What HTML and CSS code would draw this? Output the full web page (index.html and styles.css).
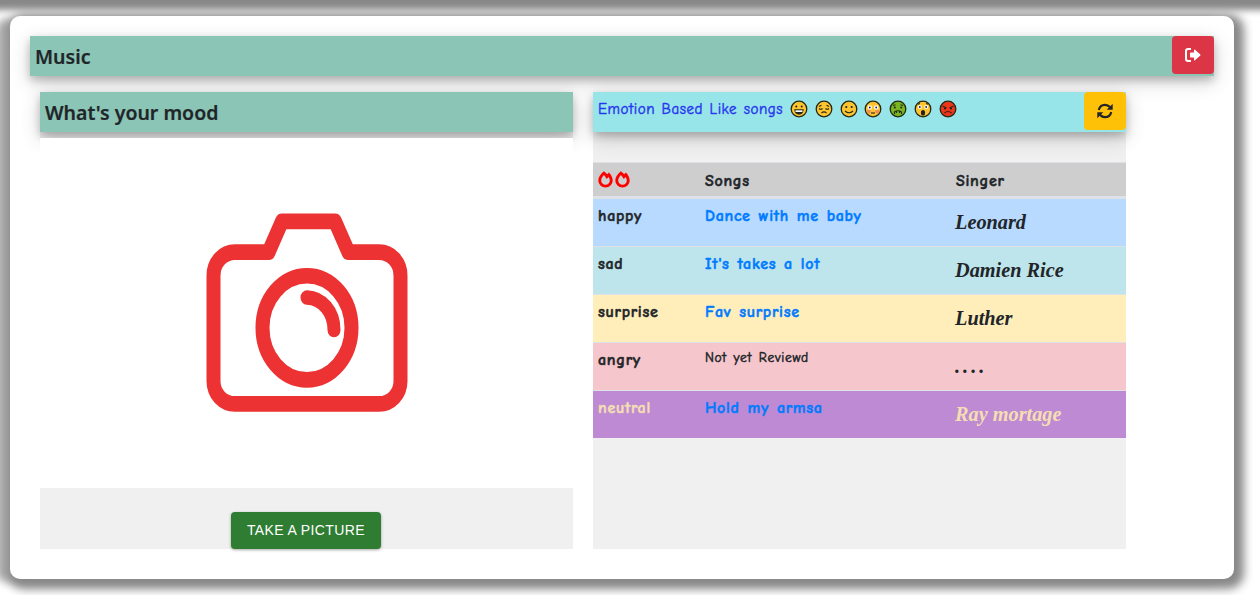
FILE: index.html
```html
<!DOCTYPE html>
<html lang="en">
<head>
<meta charset="utf-8">
<title>Music</title>
<link rel="stylesheet" href="styles.css">
</head>
<body>
<div class="page-top"></div>
<main class="card">
  <header class="bar">
    <h1 class="title">Music</h1>
    <button class="icon-btn danger" aria-label="Log out">
      <svg width="16" height="16" viewBox="0 0 16 16"><path d="M6 2H3.200Q1 2 1 4.200V11.800Q1 14 3.200 14H6" fill="none" stroke="#fff" stroke-width="2"/><path d="M5 6.200Q5 5.500 5.700 5.500H9V3.200Q9 2.200 10 2.800L15.300 7.400Q15.900 8 15.300 8.600L10 13.200Q9 13.800 9 12.800V10.500H5.700Q5 10.500 5 9.800Z" fill="#fff"/></svg>
    </button>
  </header>
  <div class="columns">
    <section class="panel">
      <div class="bar"><h2 class="title">What's your mood</h2></div>
      <div class="photo">
        <svg width="204" height="202" viewBox="0 0 204 202" fill="none" stroke="#ec3232">
          <g transform="scale(1 1.120)" stroke-width="14" stroke-linejoin="round">
            <path d="M29 35H62.500L76 7.500H129L142.500 35H173C185 35 194.500 44 194.500 56V150C194.500 161.500 185 170.500 173 170.500H29C17 170.500 7.500 161.500 7.500 150V56C7.500 44 17 35 29 35Z"/>
            <ellipse cx="101" cy="102.500" rx="44.500" ry="46.500"/>
            <path d="M101 75.500C116 76 128 88 128 104.500" stroke-width="13" stroke-linecap="round"/>
          </g>
        </svg>
      </div>
      <div class="actions"><button class="take">TAKE A PICTURE</button></div>
    </section>
    <section class="panel">
      <div class="bar aqua">
        <div class="caption"><span class="caption-text">Emotion Based Like songs</span>
          <span class="faces">
            <svg class="face" viewBox="0 0 18 18"><circle cx="9" cy="9" r="7.800"/><path d="M5 10H13Q12.500 14 9 14T5 10Z" fill="#222"/><path class="white" d="M5.500 10.300H12.500V12H5.500Z"/><circle class="dot" cx="6.300" cy="6.500" r="1"/><circle class="dot" cx="11.700" cy="6.500" r="1"/></svg>
            <svg class="face" viewBox="0 0 18 18"><circle cx="9" cy="9" r="7.800"/><path class="line" d="M4 8.500Q5.800 10 7.500 8.500M10.500 8.500Q12.200 10 14 8.500M6.500 13Q9 10.800 11.500 13M4 6.500L6.500 5.200M14 6.500L11.500 5.200"/></svg>
            <svg class="face" viewBox="0 0 18 18"><circle cx="9" cy="9" r="7.800"/><circle class="dot" cx="6.300" cy="7" r="1.100"/><circle class="dot" cx="11.700" cy="7" r="1.100"/><path class="line" d="M5 11Q9 14.500 13 11"/></svg>
            <svg class="face" viewBox="0 0 18 18"><circle cx="9" cy="9" r="7.800"/><circle class="blush" cx="4.800" cy="11.500" r="2"/><circle class="blush" cx="13.200" cy="11.500" r="2"/><circle class="white" cx="5.800" cy="7.500" r="2.200"/><circle class="white" cx="12.200" cy="7.500" r="2.200"/><circle class="dot" cx="5.800" cy="7.500" r=".9"/><circle class="dot" cx="12.200" cy="7.500" r=".9"/><path class="line" d="M7 13H11"/></svg>
            <svg class="face green" viewBox="0 0 18 18"><circle cx="9" cy="9" r="7.800"/><circle class="dot" cx="5.800" cy="7.500" r="1"/><circle class="dot" cx="12.200" cy="7.500" r="1"/><path class="line" d="M4 5.500L6.500 4.800M14 5.500L11.500 4.800M5.500 14V12Q9 9.500 12.500 12V14M7.500 11V13M10.500 11V13"/></svg>
            <svg class="face" viewBox="0 0 18 18"><circle cx="9" cy="9" r="7.800"/><circle class="white" cx="5.800" cy="7" r="2"/><circle class="white" cx="12.200" cy="7" r="2"/><circle class="dot" cx="5.800" cy="7" r=".9"/><circle class="dot" cx="12.200" cy="7" r=".9"/><ellipse class="dot" cx="9" cy="12.800" rx="2.100" ry="2.800"/><path class="line" d="M4 4.200L6 3.500M14 4.200L12 3.500"/></svg>
            <svg class="face red" viewBox="0 0 18 18"><circle cx="9" cy="9" r="7.800"/><circle class="dot" cx="6" cy="8.500" r="1.100"/><circle class="dot" cx="12" cy="8.500" r="1.100"/><path class="line" d="M3.500 6L7.500 8M14.500 6L10.500 8M5.500 13Q9 10 12.500 13"/></svg>
          </span>
        </div>
        <button class="icon-btn warning" aria-label="Refresh">
          <svg width="16" height="16" viewBox="0 0 16 16"><path d="M1.800 7C2.500 3.800 5 1.800 8 1.800C10 1.800 11.700 2.700 12.800 4M14.200 9C13.500 12.200 11 14.200 8 14.200C6 14.200 4.300 13.300 3.200 12" fill="none" stroke="#212529" stroke-width="2.200"/><path d="M15.700.8V6.800H9.700ZM.3 15.200V9.200H6.300Z" fill="#212529"/></svg>
        </button>
      </div>
      <table class="songs">
        <colgroup><col class="c1"><col class="c2"><col class="c3"></colgroup>
        <thead><tr>
          <th><span class="flames">
            <svg width="15" height="17" viewBox="0 0 15 17"><path d="M5.800.2C7.200 1.100 8.300 2.200 9.200 3.300L10.800 1.600C12.800 3.400 14.700 6.700 14.700 9.400A7.200 7.200 0 0 1 .3 9.400C.3 6.200 2.500 3 5.800.2ZM6 4C4.300 5.800 3.200 7.600 3.200 9.400A4.300 4.300 0 0 0 11.800 9.400C11.800 8.200 11.300 6.900 10.600 5.900L8.700 8.100Q7.300 5.600 6 4Z"/></svg>
            <svg width="15" height="17" viewBox="0 0 15 17"><path d="M5.800.2C7.200 1.100 8.300 2.200 9.200 3.300L10.800 1.600C12.800 3.400 14.700 6.700 14.700 9.400A7.200 7.200 0 0 1 .3 9.400C.3 6.200 2.500 3 5.800.2ZM6 4C4.300 5.800 3.200 7.600 3.200 9.400A4.300 4.300 0 0 0 11.800 9.400C11.800 8.200 11.300 6.900 10.600 5.900L8.700 8.100Q7.300 5.600 6 4Z"/></svg>
          </span></th>
          <th>Songs</th><th>Singer</th>
        </tr></thead>
        <tbody>
          <tr class="blue"><th>happy</th><td class="song">Dance with me baby</td><td class="singer">Leonard</td></tr>
          <tr class="teal"><th>sad</th><td class="song">It's takes a lot</td><td class="singer">Damien Rice</td></tr>
          <tr class="yellow"><th>surprise</th><td class="song">Fav surprise</td><td class="singer">Luther</td></tr>
          <tr class="pink"><th>angry</th><td class="none">Not yet Reviewd</td><td class="singer dots">....</td></tr>
          <tr class="purple"><th>neutral</th><td class="song">Hold my armsa</td><td class="singer">Ray mortage</td></tr>
        </tbody>
      </table>
    </section>
  </div>
</main>
</body>
</html>
```
FILE: styles.css
```css
* { box-sizing: border-box; }
html { background: #fff; }
body { margin: 0; height: 595px; overflow: hidden; color: #212529; font-family: "Segoe UI", "Noto Sans", sans-serif; }
.page-top { height: 0; box-shadow: 0 0 7px 10px #888; }
.card { width: 1224px; height: 563px; margin: 16px 0 0 10px; padding: 20px; border-radius: 10px; background: #fff; box-shadow: 4px 4px 10px 6px #888, -14px 3px 8px 0 #aaa; }
.bar { display: flex; justify-content: space-between; align-items: flex-start; height: 40px; background: #8ac5b5; box-shadow: 0 4px 8px rgba(0,0,0,.2), 0 6px 20px rgba(0,0,0,.19); }
.title { margin: 0; padding-left: 5px; font-size: 19.500px; line-height: 42px; font-weight: 600; -webkit-text-stroke: .2px; }
.icon-btn { display: flex; align-items: center; justify-content: center; width: 42px; height: 38px; padding: 0; border: 0; border-radius: 4px; }
.danger { background: #dc3545; }
.warning { background: #ffc107; }
.columns { display: grid; grid-template-columns: 533px 533px; gap: 20px; padding: 16px 10px 0; }
.panel { height: 457px; background: #f0f0f0; }
.photo { display: flex; height: 350px; margin-top: 6px; padding: 75px 0 0 165.500px; background: #fff; position: relative; }
.actions { display: flex; justify-content: center; padding-top: 24px; }
.take { width: 150px; height: 37px; padding: 0 0 2px; border: 0; border-radius: 4px; background: #2e7d32; color: #fff; font: 14px "Liberation Sans", Arial, sans-serif; letter-spacing: .4px; box-shadow: 0 1px 3px rgba(0,0,0,.35); margin-right: 1px; }
.aqua { background: #97e5e8; }
.caption { display: flex; align-items: center; height: 34px; padding-left: 5px; }
.caption-text { width: 192px; color: #2736f0; font: 15px "Comic Sans MS", "Comic Neue", "Open Sans", sans-serif; white-space: nowrap; letter-spacing: .55px; word-spacing: 1px; -webkit-text-stroke: .45px; }
.faces { display: flex; gap: 6.800px; }
.face { width: 18px; height: 18px; fill: #ffc52f; stroke: #262817; stroke-width: 1.3; }
.face .line { fill: none; stroke-width: 1.1; }
.face .dot { fill: #222; stroke: none; }
.face .white { fill: #fff; stroke: none; }
.face .blush { fill: #f68a55; stroke: none; }
.face.green { fill: #78b51e; }
.face.red { fill: #ee3519; }
.songs { width: 533px; margin-top: 30px; border-collapse: separate; border-spacing: 0; table-layout: fixed; font-family: "Comic Sans MS", "Comic Neue", "Open Sans", sans-serif; }
.c1 { width: 107px; }
.c2 { width: 251px; }
.songs th, .songs td { height: 48px; padding: 5px 5px 3px; border-top: 1px solid #dee2e6; text-align: left; vertical-align: top; font-size: 16px; line-height: 24px; font-weight: 700; white-space: nowrap; letter-spacing: .7px; -webkit-text-stroke: .5px; }
.songs thead th { height: 36px; padding-top: 6px; border-bottom: 2px solid #dee2e6; background: #cecece; }
.flames { display: flex; gap: 2px; padding-top: 2px; }
.flames path { fill: red; stroke: none; }
.songs .song { color: #007bff; word-spacing: 1.500px; }
.songs .none { padding-top: 3px; font-size: 13.500px; font-weight: 400; word-spacing: 1.500px; }
.songs .singer { padding-top: 11px; padding-left: 4px; font: italic 700 20.300px/24px "Brush Script MT", "Liberation Serif", serif; letter-spacing: 0; -webkit-text-stroke: 0; }
.songs .dots { letter-spacing: 3px; }
.blue { background: #b8daff; }
.teal { background: #bee5eb; }
.yellow { background: #ffeeba; }
.pink { background: #f5c6cb; }
.purple { background: #be8ad3; color: #f5deb3; }
```
